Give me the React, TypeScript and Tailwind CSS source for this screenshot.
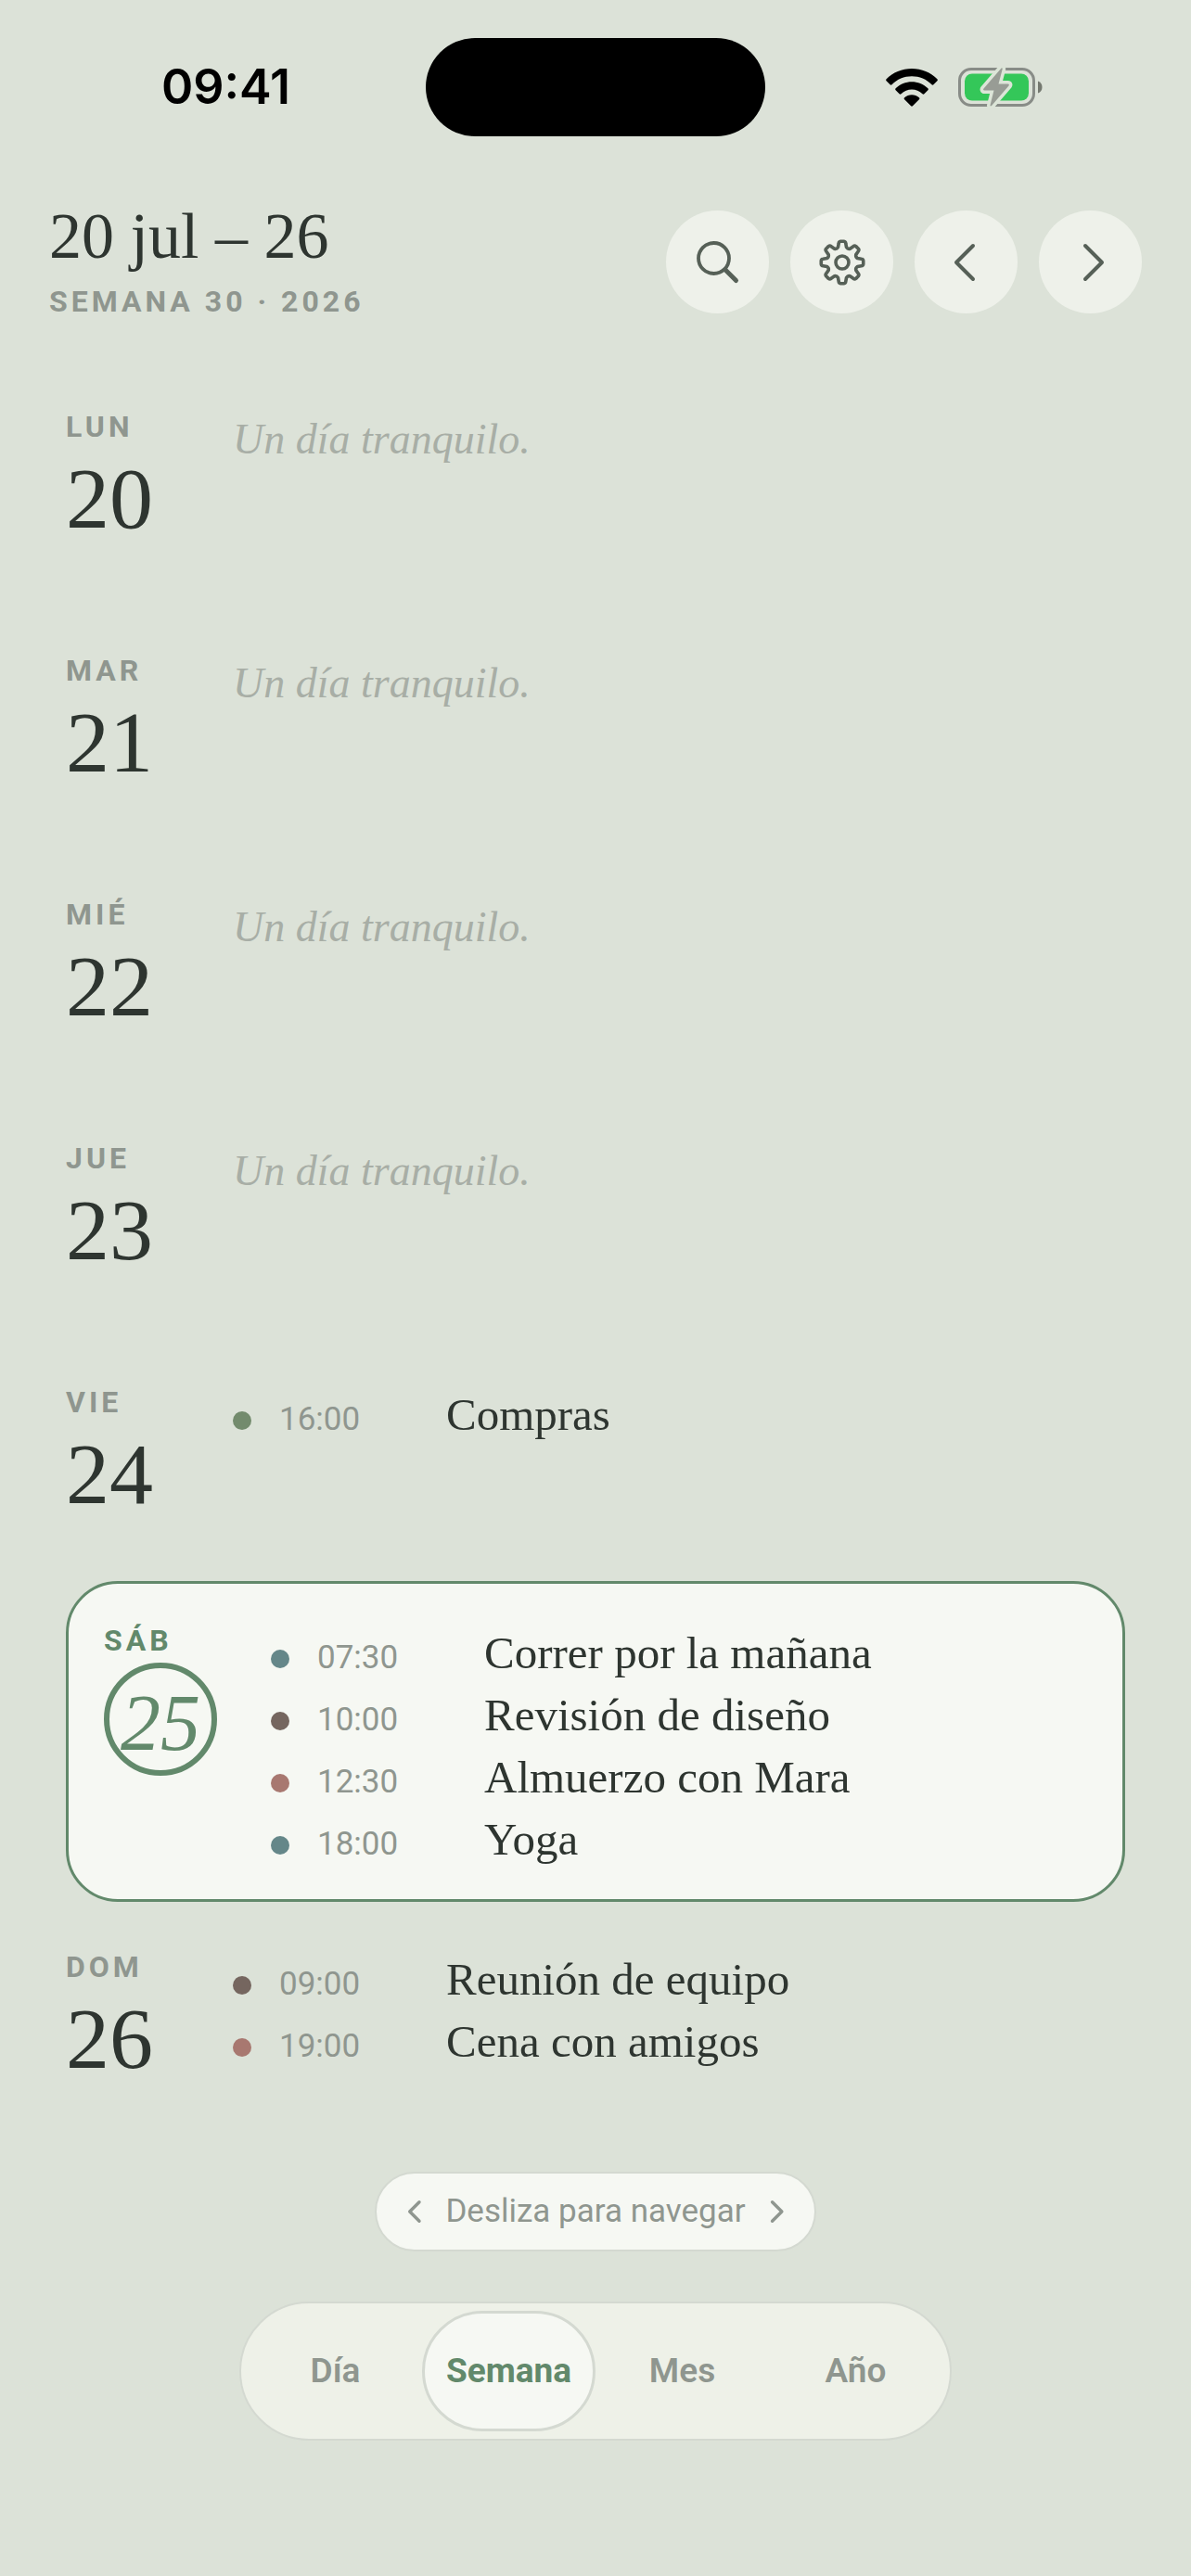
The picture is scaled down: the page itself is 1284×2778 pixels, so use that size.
import React from 'react';

type EventItem = { time: string; title: string; dot: string };
type Day = { name: string; num: number; today?: boolean; events: EventItem[] };

const DAYS: Day[] = [
  { name: 'LUN', num: 20, events: [] },
  { name: 'MAR', num: 21, events: [] },
  { name: 'MIÉ', num: 22, events: [] },
  { name: 'JUE', num: 23, events: [] },
  { name: 'VIE', num: 24, events: [{ time: '16:00', title: 'Compras', dot: 'bg-[#738b6d]' }] },
  {
    name: 'SÁB',
    num: 25,
    today: true,
    events: [
      { time: '07:30', title: 'Correr por la mañana', dot: 'bg-[#658789]' },
      { time: '10:00', title: 'Revisión de diseño', dot: 'bg-[#75665f]' },
      { time: '12:30', title: 'Almuerzo con Mara', dot: 'bg-[#a87870]' },
      { time: '18:00', title: 'Yoga', dot: 'bg-[#658789]' },
    ],
  },
  {
    name: 'DOM',
    num: 26,
    events: [
      { time: '09:00', title: 'Reunión de equipo', dot: 'bg-[#75665f]' },
      { time: '19:00', title: 'Cena con amigos', dot: 'bg-[#a87870]' },
    ],
  },
];

const VIEWS = ['Día', 'Semana', 'Mes', 'Año'];

// 8-tooth cog, outline alternates between tip and valley
const GEAR_PATH = (() => {
  const pts: string[] = [];
  for (let i = 0; i < 8; i++) {
    const a = (i * Math.PI) / 4 - Math.PI / 2;
    const at = (r: number, off: number) =>
      `${(30 + r * Math.cos(a + off)).toFixed(2)} ${(30 + r * Math.sin(a + off)).toFixed(2)}`;
    pts.push(`${i === 0 ? 'M' : 'L'}${at(17, -0.27)}`);
    pts.push(`L${at(21, -0.18)}`);
    pts.push(`Q${at(22.8, -0.16)} ${at(22.8, -0.08)}`);
    pts.push(`L${at(22.8, 0.08)}`);
    pts.push(`Q${at(22.8, 0.16)} ${at(21, 0.18)}`);
    pts.push(`L${at(17, 0.27)}`);
    pts.push(`Q${at(15.4, 0.3927)} ${at(17, 0.5154)}`);
  }
  return pts.join('') + 'Z';
})();

const WifiIcon = () => (
  <svg className="w-14 h-[41px]" viewBox="0 0 56 41" aria-hidden="true">
    <path d="M28 0C17.500 0 7.500 4 .6 11.300q-.9 1 0 2l4 4q.9.900 1.900 0C12 11.500 19.800 8.300 28 8.300s16 3.200 21.500 9q1 .9 1.900 0l4-4q.9-1 0-2C48.500 4 38.500 0 28 0Z" />
    <path d="M28 14.200c-6.500 0-12.700 2.500-17.400 7q-1 1 0 2l4 4q1 .9 1.900 0c3.100-2.900 7.200-4.600 11.500-4.600s8.400 1.700 11.500 4.600q1 .9 1.900 0l4-4q1-1 0-2c-4.700-4.500-11-7-17.500-7Z" />
    <path d="M28 28.300c-2.900 0-5.700 1-7.900 2.900q-1 1 0 2l7 7q.9.900 1.800 0l7-7q1-1 0-2c-2.200-1.900-5-2.900-7.900-2.900Z" />
  </svg>
);

const BatteryIcon = () => (
  <svg className="w-[92px] h-11" viewBox="0 0 92 44" aria-hidden="true">
    <rect x="1.500" y="2.500" width="80" height="39" rx="12.500" fill="none" stroke="#888c87" strokeWidth="3" />
    <rect x="7" y="7.500" width="69" height="29" rx="8" fill="#34c759" />
    <path d="M86 15.500c3 1 4.500 3.500 4.500 6.500s-1.500 5.500-4.500 6.500Z" fill="#74786f" />
    <path
      d="M46.500 1.500 27.500 23.500c-.8 1-.4 2 .8 2H38.500L34.500 41.500q0 1.500 1.500.5L54.500 20.500c.8-1 .4-2-.8-2H43.500L47.700 2.500q0-1.700-1.200-1Z"
      fill="#989c95"
      stroke="#dce5d8"
      strokeWidth="7"
      paintOrder="stroke"
      strokeLinejoin="round"
    />
  </svg>
);

const SearchIcon = () => (
  <svg className="w-[60px] h-[60px]" viewBox="0 0 60 60" fill="none" stroke="currentColor" strokeLinecap="round" aria-hidden="true">
    <circle cx="25.500" cy="25.500" r="16.500" strokeWidth="3.800" />
    <path d="m38 38 11.500 11.500" strokeWidth="5" />
  </svg>
);

const GearIcon = () => (
  <svg className="w-[60px] h-[60px]" viewBox="0 0 60 60" fill="none" stroke="currentColor" strokeWidth="3.600" strokeLinejoin="round" aria-hidden="true">
    <path d={GEAR_PATH} />
    <circle cx="30" cy="30" r="7" />
  </svg>
);

const Chevron = ({ right = false, stroke = 4, className }: { right?: boolean; stroke?: number; className: string }) => (
  <svg className={`overflow-visible ${className}`} viewBox="0 0 28 40" fill="none" stroke="currentColor" strokeWidth={stroke} strokeLinecap="round" strokeLinejoin="round" aria-hidden="true">
    <path d={right ? 'm8 2 18 18L8 38' : 'M21 2 3 20l18 18'} />
  </svg>
);

const RoundButton = ({ label, children }: { label: string; children: React.ReactNode }) => (
  <button aria-label={label} className="w-[111px] h-[111px] rounded-full bg-[#eef1ea] text-[#566057] flex items-center justify-center">
    {children}
  </button>
);

const DayRow = ({ day }: { day: Day }) => (
  <section
    className={
      day.today
        ? 'flex items-start h-[346px] pt-[41px] px-[38px] rounded-[56px] border-3 border-[#62896b] bg-[#f6f8f3]'
        : 'flex items-start h-[263px] pt-[50px]'
    }
  >
    <div className="w-[180px] shrink-0">
      <h2 className={`font-['Roboto',sans-serif] text-[32px] leading-10 font-bold tracking-[4px] ${day.today ? 'text-[#62896b]' : 'text-[#8f968f]'}`}>
        {day.name}
      </h2>
      {day.today ? (
        <div className="mt-1 pt-2 w-[122px] h-[122px] rounded-full border-6 border-[#62896b] flex items-center justify-center text-[86px] leading-none italic text-[#62896b]">
          {day.num}
        </div>
      ) : (
        <div className="text-[94px] leading-[114px]">{day.num}</div>
      )}
    </div>
    {day.events.length === 0 ? (
      <p className="text-[46px] leading-[67px] italic text-[#a8aea6]">Un día tranquilo.</p>
    ) : (
      <ul>
        {day.events.map((e) => (
          <li key={e.time} className="flex items-baseline h-[67px]">
            <span className={`w-5 h-5 rounded-full ${e.dot}`} />
            <span className="w-[180px] ml-[30px] font-['Roboto',sans-serif] text-[35px] text-[#8f968f]">{e.time}</span>
            <span className="text-[49px] leading-[67px]">{e.title}</span>
          </li>
        ))}
      </ul>
    )}
  </section>
);

export default function App() {
  return (
    <div className="min-h-screen bg-[#dce2d8] text-[#2e3530] font-['Liberation_Serif',serif] pb-[146px]">
      {/* Status bar */}
      <div className="grid grid-cols-[1fr_366px_1fr] items-center pt-[41px]">
        <span className="justify-self-center pl-7 font-['Inter',sans-serif] text-[52px] leading-none font-semibold text-black">09:41</span>
        <div className="h-[106px] rounded-full bg-black" />
        <div className="flex items-center justify-center gap-[22px] pr-[30px]">
          <WifiIcon />
          <BatteryIcon />
        </div>
      </div>

      <header className="flex items-start justify-between mt-20 px-[53px]">
        <div>
          <h1 className="text-[70px] leading-[56px]">20 jul – 26</h1>
          <p className="mt-6 font-['Roboto',sans-serif] text-[32px] leading-9 font-bold tracking-[4px] text-[#8f968f]">SEMANA 30 · 2026</p>
        </div>
        <div className="flex gap-[23px]">
          <RoundButton label="Buscar"><SearchIcon /></RoundButton>
          <RoundButton label="Ajustes"><GearIcon /></RoundButton>
          <RoundButton label="Semana anterior"><Chevron className="w-7 h-10" /></RoundButton>
          <RoundButton label="Semana siguiente"><Chevron right className="w-7 h-10" /></RoundButton>
        </div>
      </header>

      <main className="mt-[47px] px-[71px]">
        {DAYS.map((d) => (
          <DayRow key={d.num} day={d} />
        ))}
      </main>

      <footer className="flex flex-col items-center mt-7 font-['Roboto',sans-serif]">
        <div className="flex items-center gap-6 h-[86px] px-[34px] rounded-full border-2 border-[#d4d9d1] bg-[#f6f8f3] text-[35px] text-[#8f968f]">
          <Chevron stroke={6} className="w-4 h-6" />
          Desliza para navegar
          <Chevron right stroke={6} className="w-4 h-6" />
        </div>
        <nav className="mt-[54px] h-[150px] w-[768px] p-2 grid grid-cols-4 rounded-full border-2 border-[#d4d9d1] bg-[#eef1e8]">
          {VIEWS.map((v) => (
            <button
              key={v}
              className={
                v === 'Semana'
                  ? 'rounded-full border-3 border-[#d4d9d1] bg-[#f6f8f3] text-[37px] font-bold text-[#62896b]'
                  : 'text-[37px] font-semibold text-[#8f968f]'
              }
            >
              {v}
            </button>
          ))}
        </nav>
      </footer>
    </div>
  );
}
